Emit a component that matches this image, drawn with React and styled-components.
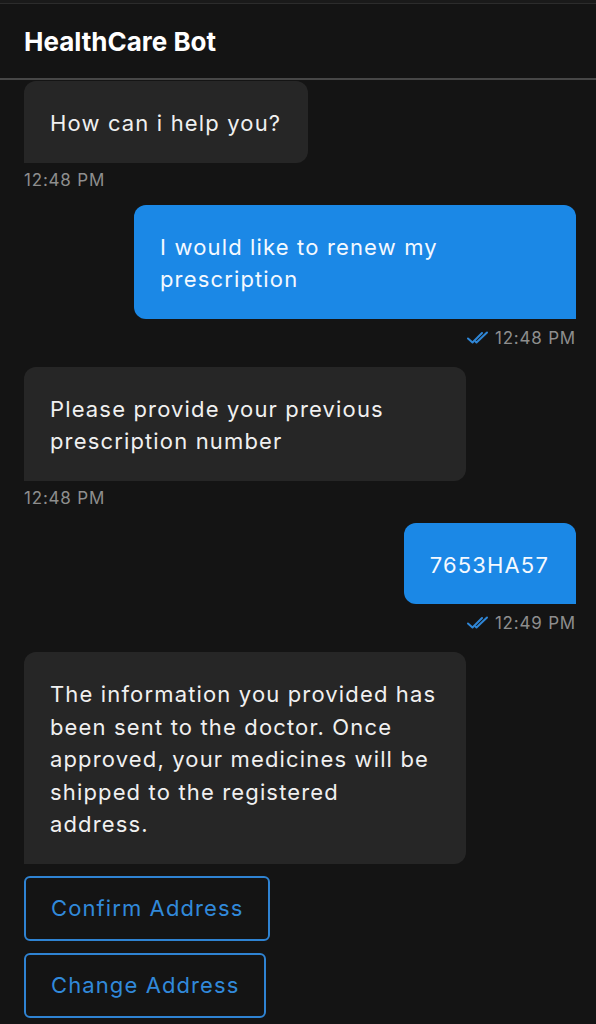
import React from "react";
import styled, { createGlobalStyle } from "styled-components";

const GlobalStyle = createGlobalStyle`
  html, body {
    margin: 0;
    padding: 0;
    background: #141414;
  }

  body {
    font-family: Inter, "Noto Sans", "Liberation Sans", sans-serif;
    -webkit-font-smoothing: antialiased;
  }
`;

const Screen = styled.div`
  width: 596px;
  min-height: 1024px;
  background: #141414;
  color: #f2f2f2;
  overflow: hidden;
`;

const StatusStrip = styled.div`
  height: 3px;
  background: #1a1a1a;
  border-bottom: 1px solid #2c2c2c;
`;

const Header = styled.header`
  height: 76px;
  display: flex;
  align-items: center;
  padding: 0 24px;
  border-bottom: 2px solid #474747;
  box-sizing: border-box;
`;

const Title = styled.h1`
  margin: 0;
  font-size: 26px;
  font-weight: 700;
  letter-spacing: 0;
  color: #ffffff;
`;

const Thread = styled.main`
  display: flex;
  flex-direction: column;
  padding: 1px 20px 0 24px;
`;

const Group = styled.div`
  display: flex;
  flex-direction: column;
  align-items: ${(p) => (p.$mine ? "flex-end" : "flex-start")};
  margin-bottom: ${(p) => (p.$mine ? "18px" : "14px")};
`;

const Bubble = styled.div`
  max-width: 442px;
  box-sizing: border-box;
  padding: 26px 27px 23px 26px;
  font-size: 22px;
  line-height: 32.5px;
  letter-spacing: 1.15px;
  border-radius: ${(p) => (p.$mine ? "12px 12px 0 12px" : "12px 12px 12px 0")};
  background: ${(p) => (p.$mine ? "#1b88e6" : "#262626")};
  color: ${(p) => (p.$mine ? "#f4f9ff" : "#f0f0f0")};
`;

const Meta = styled.div`
  display: flex;
  align-items: center;
  gap: 6px;
  margin-top: ${(p) => (p.$mine ? "8px" : "6px")};
  font-size: 17px;
  line-height: 22px;
  letter-spacing: 0.8px;
  color: #8e8e8e;
`;

const Actions = styled.div`
  display: flex;
  flex-direction: column;
  align-items: flex-start;
  gap: 12px;
  margin-top: -2px;
`;

const ActionButton = styled.button`
  height: 65px;
  padding: 0 25px;
  background: transparent;
  border: 2px solid #2f83d2;
  border-radius: 6px;
  color: #3189da;
  font-family: inherit;
  font-size: 22px;
  letter-spacing: 1.1px;
  cursor: pointer;
`;

function DoubleCheck() {
  return (
    <svg width="22" height="14" viewBox="0 0 22 14" fill="none">
      <path d="M1 7.5l4.5 4L15 2" stroke="#2f86d6" strokeWidth="2" strokeLinecap="round" strokeLinejoin="round" />
      <path d="M8.5 10.5l1 1L20 1.5" stroke="#2f86d6" strokeWidth="2" strokeLinecap="round" strokeLinejoin="round" />
    </svg>
  );
}

const messages = [
  { mine: false, text: "How can i help you?", time: "12:48 PM" },
  { mine: true, text: "I would like to renew my prescription", time: "12:48 PM" },
  { mine: false, text: "Please provide your previous prescription number", time: "12:48 PM" },
  { mine: true, text: "7653HA57", time: "12:49 PM" },
];

export default function App() {
  return (
    <Screen>
      <GlobalStyle />
      <StatusStrip />
      <Header>
        <Title>HealthCare Bot</Title>
      </Header>
      <Thread>
        {messages.map((m, i) => (
          <Group key={i} $mine={m.mine}>
            <Bubble $mine={m.mine}>{m.text}</Bubble>
            <Meta $mine={m.mine}>
              {m.mine && <DoubleCheck />}
              {m.time}
            </Meta>
          </Group>
        ))}
        <Group>
          <Bubble>
            The information you provided has been sent to the doctor. Once approved, your medicines will be
            shipped to the registered address.
          </Bubble>
        </Group>
        <Actions>
          <ActionButton>Confirm Address</ActionButton>
          <ActionButton>Change Address</ActionButton>
        </Actions>
      </Thread>
    </Screen>
  );
}
